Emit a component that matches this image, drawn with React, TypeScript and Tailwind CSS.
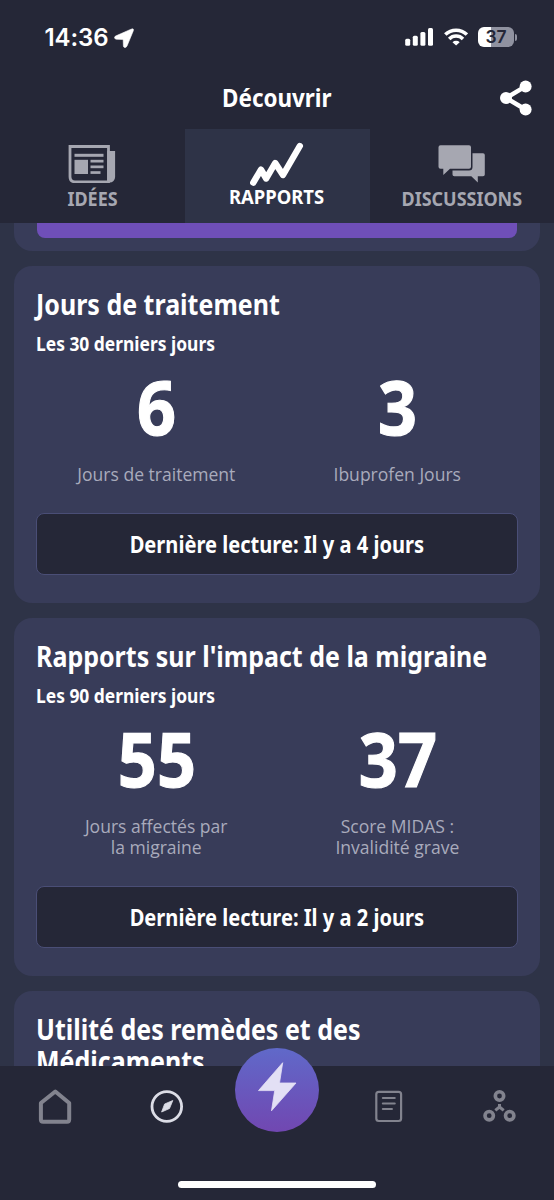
import type { ReactNode } from "react";

const bold = "font-['Noto_Sans','Open_Sans',sans-serif] font-bold";
const regular = "font-['Open_Sans','Noto_Sans',sans-serif] font-normal";

function StatusBar() {
  return (
    <div className="flex h-[74px] items-center justify-between pl-[44.5px] pr-[37px]">
      <div className="flex items-center gap-[6px] pt-[2px]">
        <span className="font-['Inter',sans-serif] text-[24px] leading-[30px] font-semibold tracking-[-0.1px] text-white">14:36</span>
        <svg width="20" height="20" viewBox="114.5 27 20 20" fill="#fff">
          <path d="M131.600 28.200Q134.700 27 133.700 30L127.500 45Q126.500 47 124.800 46.400Q123.900 46 123.900 44.800L123.700 38.900Q123.700 38.400 123.200 38.400L116.800 38.200Q115 38 115 36.600Q115.100 35.400 116.600 34.800Z" stroke="#fff" strokeWidth=".6" />
        </svg>
      </div>
      <div className="flex items-center gap-[10px]">
        <svg width="29" height="19" viewBox="405 28 29 19" fill="#fff">
          <rect x="405.200" y="38.800" width="5" height="6.900" rx="1.500" />
          <rect x="412.800" y="35.800" width="5" height="9.900" rx="1.500" />
          <rect x="420.400" y="32" width="5" height="13.700" rx="1.500" />
          <rect x="428" y="28" width="5" height="17.700" rx="1.500" />
        </svg>
        <svg width="24" height="18" viewBox="443 28 24 18" fill="none" stroke="#fff" strokeWidth="3.500">
          <path d="M444.300 34.600a15.300 15.300 0 0 1 21.600 0" />
          <path d="M448.200 38.900a9.800 9.800 0 0 1 13.800 0" />
          <path d="M455.100 45.600l-3.600-3.300a5.200 5.200 0 0 1 7.200 0z" fill="#fff" stroke="none" />
        </svg>
        <div className="flex items-center gap-px">
          <div className="flex h-5 w-9 items-center justify-center rounded-[6px] bg-[linear-gradient(90deg,#fff_37%,#9092a0_37%)]">
            <span className="font-['Inter',sans-serif] text-[17.5px] leading-5 font-semibold text-[#252737]">37</span>
          </div>
          <div className="h-[7px] w-[2px] rounded-r-full bg-[#9092a0]" />
        </div>
      </div>
    </div>
  );
}

function Header() {
  return (
    <div className="grid h-[55px] grid-cols-[1fr_auto_1fr] items-center">
      <span />
      <h1 className={`${bold} scale-x-[.915] pb-[7px] text-[24.5px] leading-[34px] whitespace-nowrap text-white`}>Découvrir</h1>
      <svg className="mb-[7px] mr-[22px] justify-self-end" width="32" height="36" viewBox="500 80 32 36" fill="#fff" stroke="#fff">
        <path d="M525.500 86.400L506 98l19.500 11.500" fill="none" strokeWidth="4.500" />
        <circle cx="525.600" cy="86.400" r="6" stroke="none" />
        <circle cx="506" cy="98" r="6" stroke="none" />
        <circle cx="525.600" cy="109.400" r="6" stroke="none" />
      </svg>
    </div>
  );
}

function Tabs() {
  return (
    <div className="grid h-[94px] grid-cols-[184.5px_185px_184.5px]">
      <div className="flex flex-col items-center pt-4">
        <svg width="48" height="38" viewBox="68.5 145 48 38" fill="#a6a7b1">
          <path d="M70.500 146.500h38.500v35.300h-33.500q-5 0-5-5z" fill="none" stroke="#a6a7b1" strokeWidth="2.800" />
          <path d="M107.700 151h7.900v26a5.500 5.500 0 0 1-5.500 5.500h-2.400z" />
          <rect x="75" y="153.800" width="29" height="3" />
          <rect x="75" y="159.800" width="13.500" height="14.200" />
          <rect x="91" y="159.800" width="13" height="2.700" />
          <rect x="91" y="165.500" width="13" height="2.700" />
          <rect x="91" y="171.200" width="10" height="2.700" />
        </svg>
        <span className={`${bold} mt-[3px] scale-x-[.945] text-[19px] leading-[26px] text-[#a6a7b1]`}>IDÉES</span>
      </div>
      <div className="flex flex-col items-center bg-[#2e3347] pt-[13px]">
        <svg width="54" height="46" viewBox="250 142 54 46" fill="none" stroke="#fff" strokeWidth="6.400" strokeLinecap="round" strokeLinejoin="round">
          <path d="M253.300 182.600L261 169.700L266.200 178.500L275.200 163L283 175L299.800 146" />
        </svg>
        <span className={`${bold} -mt-[4px] scale-x-[.98] text-[18.8px] leading-[26px] text-white`}>RAPPORTS</span>
      </div>
      <div className="flex flex-col items-center pt-4">
        <svg width="48" height="38" viewBox="438 145 48 38" fill="#a6a7b1">
          <path d="M472.500 153.200h10.500q1.800 0 1.800 1.800v19.500q0 1.800-1.800 1.800h-5.200v6.200l-6.500-6.200h-17q-1.800 0-1.800-1.800v-4h16.500q3.500 0 3.500-3.500z" />
          <path d="M440.500 145.300h28.500q2 0 2 2v19.500q0 2-2 2h-19l-6.700 6.200v-6.200h-2.800q-2 0-2-2v-19.500q0-2 2-2z" />
        </svg>
        <span className={`${bold} mt-[3px] scale-x-[.945] text-[19px] leading-[26px] text-[#a6a7b1]`}>DISCUSSIONS</span>
      </div>
    </div>
  );
}

interface Stat {
  value: string;
  label: ReactNode;
}

function ReportCard({ title, period, stats, action }: { title: string; period: string; stats: Stat[]; action: string }) {
  return (
    <section className="shrink-0 rounded-[18px] bg-[#383c59] px-[21.5px] pt-[21px] pb-[28px]">
      <h2 className={`${bold} origin-left scale-x-[.893] text-[28px] leading-[34px] whitespace-nowrap text-white`}>{title}</h2>
      <p className={`${bold} mt-[11px] origin-left scale-x-[.893] text-[19.5px] leading-6 whitespace-nowrap text-white`}>{period}</p>
      <div className="mt-[10px] grid grid-cols-2">
        {stats.map((s) => (
          <div key={s.value} className="flex flex-col items-center text-center">
            <span className={`${bold} scale-x-[.91] text-[75px] leading-[80px] text-white [-webkit-text-stroke:1.2px_#fff]`}>{s.value}</span>
            <span className={`${regular} mt-[17px] scale-x-[.948] text-[18.500px] leading-[21px] whitespace-nowrap text-[#a9abbc]`}>{s.label}</span>
          </div>
        ))}
      </div>
      <button className="mt-[29px] flex h-[62px] w-full items-center justify-center rounded-[8px] border-[1.500px] border-[#4a4e76] bg-[#252737] pt-[2px]">
        <span className={`${bold} scale-x-[.893] text-[22.5px] leading-8 whitespace-nowrap text-white`}>{action}</span>
      </button>
    </section>
  );
}

function BottomNav() {
  return (
    <nav className="relative flex h-[134px] shrink-0 flex-col items-center bg-[#252737]">
      <div className="grid w-full grid-cols-5 items-center justify-items-center pt-[21.5px]">
        <svg width="36" height="38" viewBox="37.400 1088 36 38" fill="none" stroke="#82838e" strokeWidth="4" strokeLinejoin="round">
          <path d="M55.700 1091.500L69.600 1103V1119.500Q69.600 1121.700 67.400 1121.700H43.500Q41.300 1121.700 41.300 1119.500V1103Z" />
        </svg>
        <svg width="36" height="38" viewBox="148.200 1088 36 38" fill="none" stroke="#dcdde6" strokeWidth="2.800">
          <circle cx="167" cy="1106.500" r="14.800" />
          <path d="M173 1100.500L169.700 1108.500L161.800 1112L164.800 1104Z" fill="#dcdde6" stroke="#dcdde6" strokeWidth=".8" strokeLinejoin="round" />
        </svg>
        <span />
        <svg width="36" height="38" viewBox="370.100 1088 36 38" fill="none" stroke="#82838e" strokeWidth="2.200" strokeLinecap="round">
          <rect x="376.400" y="1091.800" width="24.800" height="29.200" rx="2.500" />
          <path d="M383 1098h11.800M383 1103.500h11.800M383 1109h9" />
        </svg>
        <svg width="36" height="38" viewBox="481 1088 36 38" fill="none" stroke="#82838e" strokeWidth="3.600">
          <circle cx="499.500" cy="1096" r="4.200" />
          <circle cx="489.200" cy="1115.700" r="4.200" />
          <circle cx="509.700" cy="1115.700" r="4.200" />
          <path d="M499.500 1104v4M499.500 1107l-4.200 3.400M499.500 1107l4.200 3.400" strokeWidth="3" />
        </svg>
      </div>
      <div className="mt-auto mb-[12px] h-[7px] w-[198px] rounded-full bg-white" />
      <div className="absolute -top-[18px] left-[235px] flex size-[84px] items-center justify-center rounded-full bg-[linear-gradient(180deg,#6069c9,#7147b1)]">
        <svg width="84" height="84" viewBox="235 1048 84 84" fill="#e3e0f5" stroke="#e3e0f5" strokeLinejoin="round" strokeWidth=".8">
          <path d="M282.700 1062.700L258.500 1090.600H274.700L271.500 1110.800L296 1083H279.500Z" />
        </svg>
      </div>
    </nav>
  );
}

export default function App() {
  return (
    <div className="flex h-[1200px] w-[554px] flex-col overflow-hidden bg-[#2e3347]">
      <header className="h-[223px] shrink-0 bg-[#252737]">
        <StatusBar />
        <Header />
        <Tabs />
      </header>
      <main className="flex h-[843px] shrink-0 flex-col gap-[15px] overflow-hidden px-[14.4px]">
        <div className="h-[28.400px] shrink-0 rounded-b-[18px] bg-[#383c59] px-[22.5px]">
          <div className="h-[15px] rounded-b-[8px] bg-[#6f4fb8]" />
        </div>
        <ReportCard
          title="Jours de traitement"
          period="Les 30 derniers jours"
          stats={[
            { value: "6", label: "Jours de traitement" },
            { value: "3", label: "Ibuprofen Jours" },
          ]}
          action="Dernière lecture: Il y a 4 jours"
        />
        <ReportCard
          title="Rapports sur l'impact de la migraine"
          period="Les 90 derniers jours"
          stats={[
            { value: "55", label: <>Jours affectés par<br />la migraine</> },
            { value: "37", label: <>Score MIDAS :<br />Invalidité grave</> },
          ]}
          action="Dernière lecture: Il y a 2 jours"
        />
        <section className="h-[200px] shrink-0 rounded-t-[18px] bg-[#383c59] px-[21.5px] pt-[22px]">
          <h2 className={`${bold} origin-left scale-x-[.893] text-[28px] leading-8 whitespace-nowrap text-white`}>
            Utilité des remèdes et des<br />Médicaments
          </h2>
        </section>
      </main>
      <BottomNav />
    </div>
  );
}
